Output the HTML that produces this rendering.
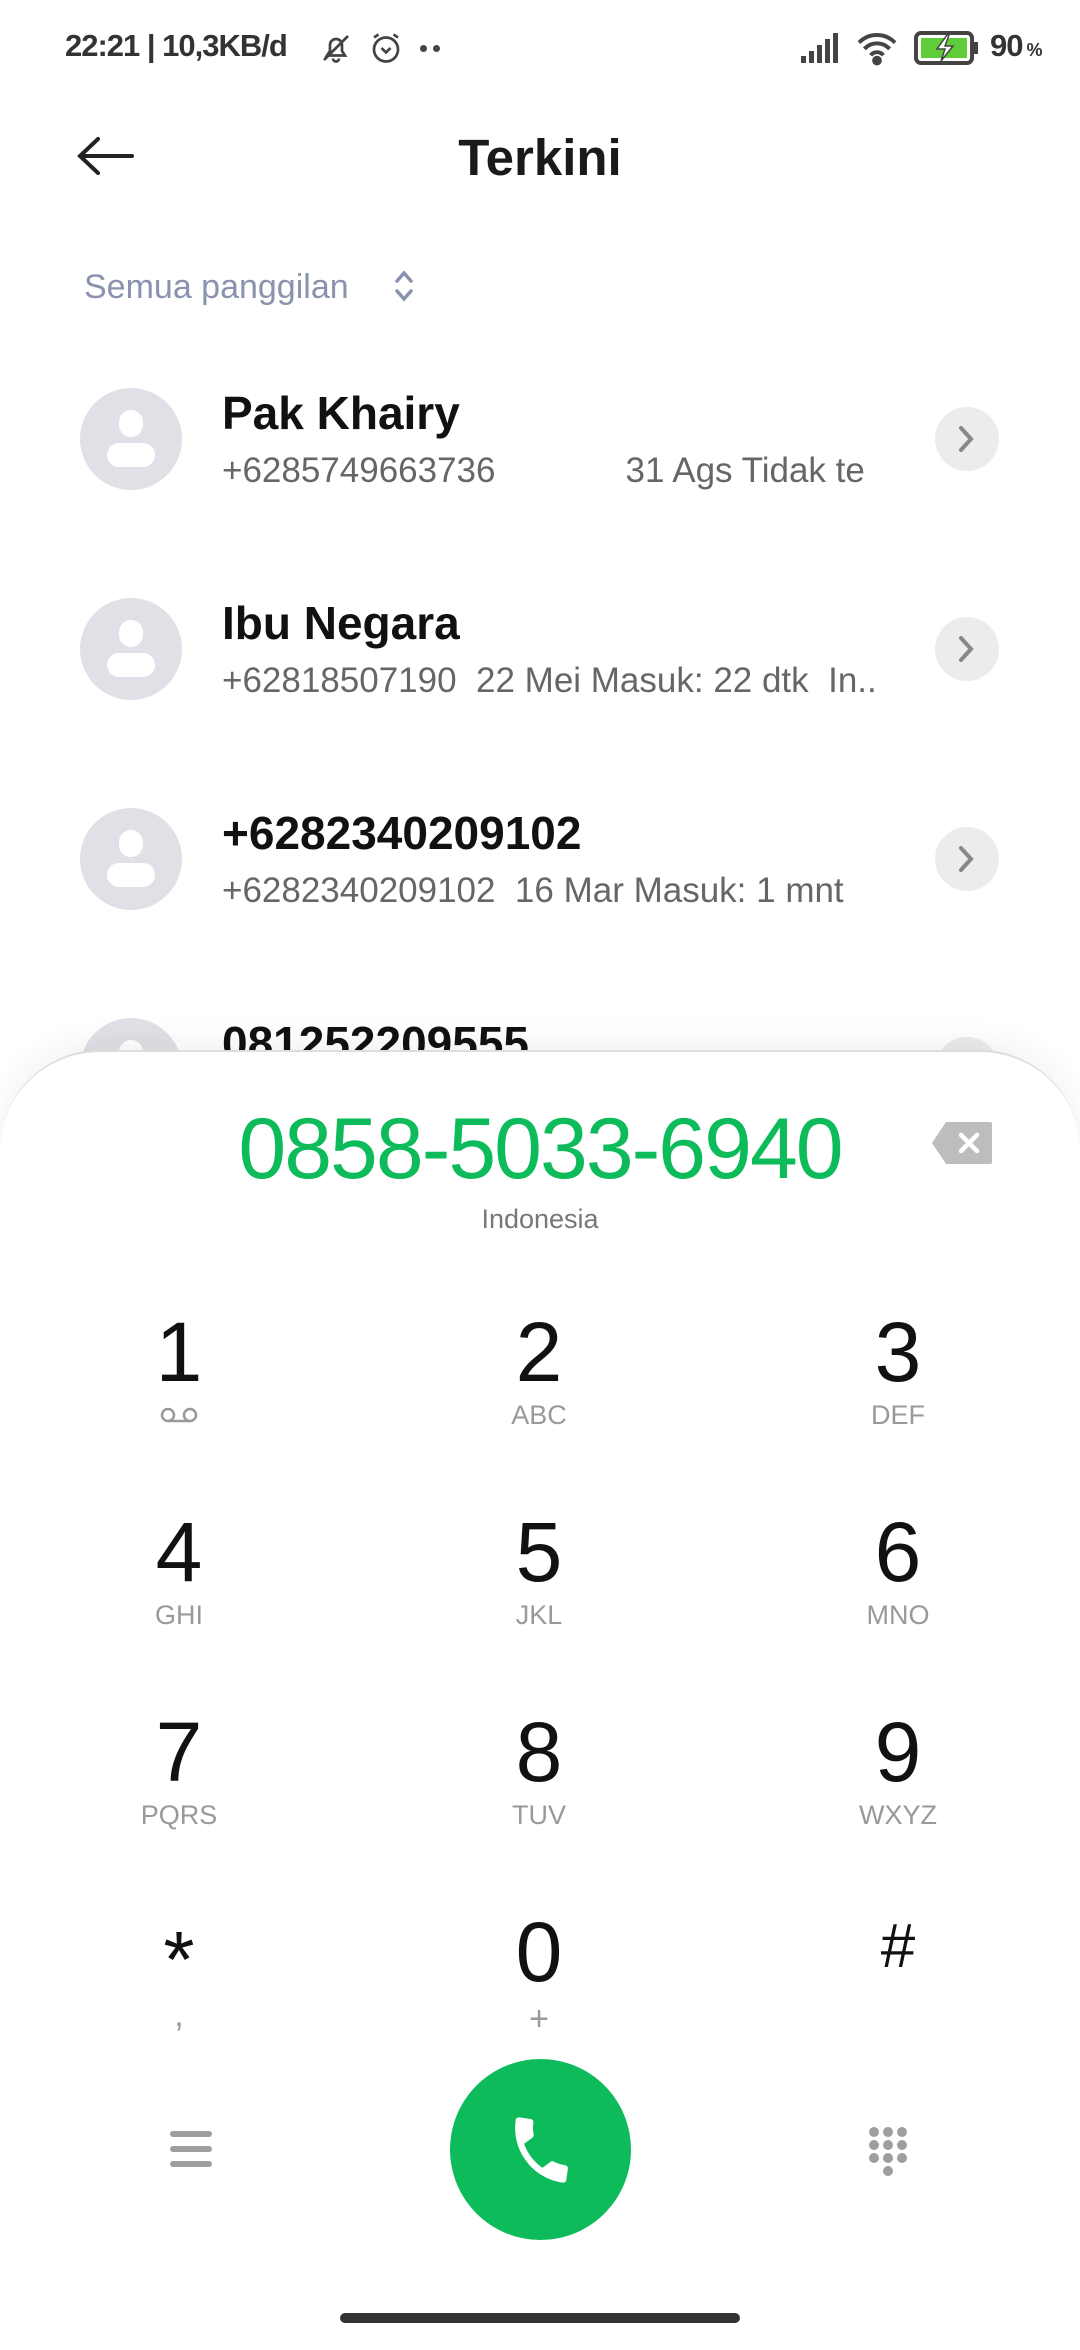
<!DOCTYPE html>
<html><head><meta charset="utf-8"><style>
*{margin:0;padding:0;box-sizing:border-box}
body{width:1080px;height:2340px;background:#fff;position:relative;overflow:hidden;font-family:"Liberation Sans",sans-serif}
.a{position:absolute}
.sb{top:28px;font-size:31px;font-weight:bold;color:#333;letter-spacing:-1px}
.name{left:222px;font-size:46px;color:#111;font-weight:bold}
.num{left:222px;font-size:35px;color:#666;white-space:nowrap}
.av{left:80px;width:102px;height:102px;border-radius:50%;background:#dfe1e6}
.av:before{content:"";position:absolute;left:39px;top:22px;width:24px;height:27px;border-radius:12px;background:#fff}
.av:after{content:"";position:absolute;left:27px;top:55px;width:48px;height:24px;border-radius:12px;background:#fff}
.ch{left:935px;width:64px;height:64px;border-radius:50%;background:#ececec}
.ch svg{position:absolute;left:20px;top:18px}
.d{width:240px;text-align:center;font-size:84px;color:#111;font-weight:300;line-height:1}
.l{width:240px;text-align:center;font-size:27px;color:#999;line-height:1}
</style></head><body>
<div class="a sb" style="left:65px">22:21 | 10,3KB/d</div>
<svg class="a" style="left:318px;top:30px" width="36" height="36" viewBox="0 0 24 24" fill="none" stroke="#444" stroke-width="1.8"><path d="M6 17h12l-2-3v-4a4 4 0 0 0-8 0v4z M10 19a2 2 0 0 0 4 0 M4 20L20 4"/></svg>
<svg class="a" style="left:368px;top:30px" width="36" height="36" viewBox="0 0 24 24" fill="none" stroke="#444" stroke-width="1.8"><circle cx="12" cy="13" r="8"/><path d="M9 12l3 3 3-3M4 5l3-2M20 5l-3-2"/></svg>
<div class="a" style="left:420px;top:45px;width:7px;height:7px;border-radius:50%;background:#444"></div>
<div class="a" style="left:433px;top:45px;width:7px;height:7px;border-radius:50%;background:#444"></div>
<svg class="a" style="left:800px;top:32px" width="40" height="32" viewBox="0 0 40 32" fill="#444"><rect x="1" y="24" width="5" height="7"/><rect x="9" y="19" width="5" height="12"/><rect x="17" y="13" width="5" height="18"/><rect x="25" y="7" width="5" height="24"/><rect x="33" y="1" width="5" height="30"/></svg>
<svg class="a" style="left:855px;top:30px" width="44" height="36" viewBox="0 0 24 20" fill="none" stroke="#444" stroke-width="2.2"><path d="M2 7a14 14 0 0 1 20 0M5 10.5a9.5 9.5 0 0 1 14 0M8.5 14a4.5 4.5 0 0 1 7 0"/><circle cx="12" cy="17" r="1.6" fill="#444"/></svg>
<svg class="a" style="left:913px;top:30px" width="68" height="36" viewBox="0 0 68 36"><rect x="3" y="3" width="56" height="30" rx="5" fill="none" stroke="#444" stroke-width="4"/><rect x="8" y="8" width="46" height="20" fill="#5fcc3a"/><rect x="61" y="12" width="4" height="12" fill="#444"/><path d="M34 5L24 19h8l-4 12 12-15h-8l4-11z" fill="#fff" stroke="#444" stroke-width="1.5"/></svg>
<div class="a sb" style="left:990px">90<span style="font-size:18px"> %</span></div>

<svg class="a" style="left:76px;top:136px" width="60" height="40" viewBox="0 0 60 40" fill="none" stroke="#222" stroke-width="4" stroke-linecap="round"><path d="M56 20H4M22 3L4 20l18 17"/></svg>
<div class="a" style="left:0;width:1080px;text-align:center;top:128px;font-size:51px;font-weight:bold;color:#1a1a1a">Terkini</div>
<div class="a" style="left:84px;top:268px;font-size:34px;color:#8a93ad">Semua panggilan</div>
<svg class="a" style="left:392px;top:268px" width="24" height="36" viewBox="0 0 24 36" fill="none" stroke="#8a93ad" stroke-width="3.5" stroke-linecap="round"><path d="M5 13l7-8 7 8M5 23l7 8 7-8"/></svg>

<div class="a av" style="top:388px"></div>
<div class="a name" style="top:386px">Pak Khairy</div>
<div class="a num" style="top:451px">+6285749663736<span style="margin-left:130px">31 Ags Tidak te</span></div>
<div class="a ch" style="top:407px"><svg width="24" height="28" viewBox="0 0 24 28" fill="none" stroke="#888" stroke-width="4" stroke-linecap="round"><path d="M6 3l10 11L6 25"/></svg></div>

<div class="a av" style="top:598px"></div>
<div class="a name" style="top:596px">Ibu Negara</div>
<div class="a num" style="top:661px">+62818507190&nbsp; 22 Mei Masuk: 22 dtk&nbsp; In..</div>
<div class="a ch" style="top:617px"><svg width="24" height="28" viewBox="0 0 24 28" fill="none" stroke="#888" stroke-width="4" stroke-linecap="round"><path d="M6 3l10 11L6 25"/></svg></div>

<div class="a av" style="top:808px"></div>
<div class="a name" style="top:806px">+6282340209102</div>
<div class="a num" style="top:871px">+6282340209102&nbsp; 16 Mar Masuk: 1 mnt</div>
<div class="a ch" style="top:827px"><svg width="24" height="28" viewBox="0 0 24 28" fill="none" stroke="#888" stroke-width="4" stroke-linecap="round"><path d="M6 3l10 11L6 25"/></svg></div>

<div class="a av" style="top:1018px"></div>
<div class="a name" style="top:1016px">081252209555</div>
<div class="a ch" style="top:1037px"></div>

<div class="a" style="left:0;top:1050px;width:1080px;height:1300px;background:#fff;border-radius:100px 100px 0 0;border-top:2px solid #ddd;box-shadow:0 -10px 30px rgba(0,0,0,0.05)"></div>
<div class="a" style="left:0;width:1080px;text-align:center;top:1100px;font-size:86px;color:#0dbb5a;letter-spacing:-2px">0858-5033-6940</div>
<svg class="a" style="left:932px;top:1122px" width="60" height="42" viewBox="0 0 60 42"><path d="M14 0H58a2 2 0 0 1 2 2V40a2 2 0 0 1-2 2H14L0 21z" fill="#bdbdbd"/><path d="M29 13l16 16M45 13L29 29" stroke="#fff" stroke-width="4.5" stroke-linecap="round"/></svg>
<div class="a" style="left:0;width:1080px;text-align:center;top:1204px;font-size:27px;color:#777">Indonesia</div>

<div class="a d" style="left:59px;top:1310px">1</div>
<svg class="a" style="left:159px;top:1406px" width="40" height="18" viewBox="0 0 40 18" fill="none" stroke="#999" stroke-width="2.5"><circle cx="9" cy="9" r="6"/><circle cx="31" cy="9" r="6"/><path d="M9 15h22"/></svg>
<div class="a d" style="left:419px;top:1310px">2</div><div class="a l" style="left:419px;top:1402px">ABC</div>
<div class="a d" style="left:778px;top:1310px">3</div><div class="a l" style="left:778px;top:1402px">DEF</div>
<div class="a d" style="left:59px;top:1510px">4</div><div class="a l" style="left:59px;top:1602px">GHI</div>
<div class="a d" style="left:419px;top:1510px">5</div><div class="a l" style="left:419px;top:1602px">JKL</div>
<div class="a d" style="left:778px;top:1510px">6</div><div class="a l" style="left:778px;top:1602px">MNO</div>
<div class="a d" style="left:59px;top:1710px">7</div><div class="a l" style="left:59px;top:1802px">PQRS</div>
<div class="a d" style="left:419px;top:1710px">8</div><div class="a l" style="left:419px;top:1802px">TUV</div>
<div class="a d" style="left:778px;top:1710px">9</div><div class="a l" style="left:778px;top:1802px">WXYZ</div>
<div class="a d" style="left:59px;top:1920px;font-size:80px">*</div><div class="a l" style="left:59px;top:1998px;font-size:34px">,</div>
<div class="a d" style="left:419px;top:1910px">0</div><div class="a l" style="left:419px;top:2002px;font-size:34px">+</div>
<div class="a d" style="left:778px;top:1916px;font-size:62px;font-weight:400">#</div>

<svg class="a" style="left:168px;top:2128px" width="46" height="42" viewBox="0 0 46 42" fill="#9e9e9e"><rect x="2" y="3" width="42" height="6" rx="3"/><rect x="2" y="18" width="42" height="6" rx="3"/><rect x="2" y="33" width="42" height="6" rx="3"/></svg>
<div class="a" style="left:450px;top:2059px;width:181px;height:181px;border-radius:50%;background:#0dbb5a"></div>
<svg class="a" style="left:502px;top:2111px" width="78" height="78" viewBox="0 0 24 24"><g transform="rotate(8 12 12)"><path d="M6.6 10.8c1.4 2.8 3.8 5.1 6.6 6.6l2.2-2.2c.3-.3.7-.4 1-.2 1.1.4 2.3.6 3.6.6.6 0 1 .4 1 1V20c0 .6-.4 1-1 1C10.6 21 3 13.4 3 4c0-.6.4-1 1-1h3.5c.6 0 1 .4 1 1 0 1.3.2 2.5.6 3.6.1.3 0 .7-.2 1z" fill="#fff"/></g></svg>
<svg class="a" style="left:866px;top:2124px" width="44" height="54" viewBox="0 0 44 54" fill="#9e9e9e"><circle cx="8" cy="8" r="5"/><circle cx="22" cy="8" r="5"/><circle cx="36" cy="8" r="5"/><circle cx="8" cy="21" r="5"/><circle cx="22" cy="21" r="5"/><circle cx="36" cy="21" r="5"/><circle cx="8" cy="34" r="5"/><circle cx="22" cy="34" r="5"/><circle cx="36" cy="34" r="5"/><circle cx="22" cy="47" r="5"/></svg>
<div class="a" style="left:340px;top:2313px;width:400px;height:10px;border-radius:5px;background:#333"></div>
</body></html>
